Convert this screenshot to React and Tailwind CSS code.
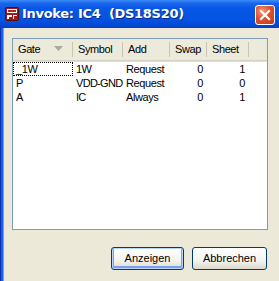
import React from 'react';

const columns = [
  { key: 'gate', label: 'Gate', width: 'w-[60px]', align: 'left', sort: true },
  { key: 'symbol', label: 'Symbol', width: 'w-[50px]', align: 'left' },
  { key: 'add', label: 'Add', width: 'w-[47px]', align: 'left' },
  { key: 'swap', label: 'Swap', width: 'w-[37px]', align: 'right' },
  { key: 'sheet', label: 'Sheet', width: 'w-[42px]', align: 'right' },
];

const rows = [
  { gate: '_1W', symbol: '1W', add: 'Request', swap: '0', sheet: '1' },
  { gate: 'P', symbol: 'VDD-GND', add: 'Request', swap: '0', sheet: '0' },
  { gate: 'A', symbol: 'IC', add: 'Always', swap: '0', sheet: '1' },
];

const AppIcon = () => (
  <svg width="14" height="14" viewBox="0 0 14 14">
    <rect x="0.5" y="0.5" width="13" height="13" rx="1" fill="#9b1b1b" stroke="#5a0a0a" />
    <rect x="2" y="2" width="10" height="4" fill="#fff" />
    <rect x="3" y="3" width="8" height="2" fill="#b42222" />
    <path d="M2 8h5v2H4v2H2z" fill="#fff" />
    <path d="M8 8h4v1H9v3H8z" fill="#fff" />
  </svg>
);

const XpButton = ({ children, isDefault, width }) => (
  <button
    className={`${width} h-[23px] rounded-[3px] border border-[#003c74] bg-[linear-gradient(to_bottom,#ffffff_0%,#f4f3ee_60%,#dcd9cc_100%)] text-[11px] text-black ${
      isDefault ? 'shadow-[inset_0_0_0_1px_#b8d4f8,inset_0_-1px_0_2px_#7d9ff0]' : ''
    }`}
  >
    {children}
  </button>
);

export default function App() {
  return (
    <div className="w-[279px] h-[281px] flex flex-col overflow-hidden font-['Liberation_Sans',Arial,sans-serif] select-none">
      {/* Title bar */}
      <div className="h-[28px] flex items-center pl-[5px] pr-[4px] bg-[linear-gradient(to_bottom,#3b8cf8_0%,#1a64ec_12%,#0758e6_30%,#0453e3_70%,#0347d2_92%,#0a3fb8_100%)]">
        <AppIcon />
        <span className="ml-[3px] text-[13px] font-bold text-white whitespace-pre [text-shadow:1px_1px_0_#0b2a8a] font-['DejaVu_Sans',sans-serif] tracking-[-0.3px]">
          Invoke: IC4  (DS18S20)
        </span>
        <div className="ml-auto w-[20px] h-[20px] mt-[1px] rounded-[3px] border border-white bg-[radial-gradient(circle_at_35%_30%,#f29a7e_0%,#e0512d_45%,#c23a17_100%)] flex items-center justify-center">
          <svg width="12" height="12" viewBox="0 0 12 12">
            <path d="M2 2L10 10M10 2L2 10" stroke="#fff" strokeWidth="2.2" strokeLinecap="square" />
          </svg>
        </div>
      </div>

      {/* Body */}
      <div className="flex-1 flex">
        <div className="w-[4px] bg-[linear-gradient(to_right,#0a2fb0_0,#0a2fb0_1px,#1b5fe8_1px,#1b5fe8_3px,#6aa0f5_3px)]" />
        <div className="flex-1 bg-[#ece9d8] pl-[8px] pt-[10px] flex flex-col">
          {/* List view */}
          <div className="w-[256px] h-[192px] border border-[#7f9db9] bg-white flex flex-col text-[11px] text-black tracking-[-0.4px]">
            <div className="h-[22px] flex bg-[#ebeadb] border-b border-[#d6d2c2] shadow-[0_1px_0_#e2dfd0]">
              {columns.map((c) => (
                <div
                  key={c.key}
                  className={`${c.width} relative flex items-center pl-[5px] border-r border-[#c7c5b2] my-[3px]`}
                >
                  <span>{c.label}</span>
                  {c.sort && (
                    <svg className="absolute right-[9px] top-[4px]" width="9" height="5" viewBox="0 0 9 5">
                      <path d="M0 0h9L4.5 5z" fill="#aca899" />
                    </svg>
                  )}
                </div>
              ))}
              <div className="flex-1" />
            </div>
            <div className="mt-[1px]">
              {rows.map((r, i) => (
                <div key={i} className="h-[14px] flex items-center">
                  {columns.map((c) => (
                    <div
                      key={c.key}
                      className={`${c.width} shrink-0 h-[14px] flex items-center whitespace-nowrap ${
                        c.align === 'right' ? 'justify-end pr-[4px]' : 'pl-[3px]'
                      } ${c.key === 'symbol' ? 'tracking-[-0.7px]' : ''} ${
                        i === 0 && c.key === 'gate' ? 'outline outline-1 outline-dotted outline-black -outline-offset-1' : ''
                      }`}
                    >
                      {r[c.key]}
                    </div>
                  ))}
                </div>
              ))}
            </div>
          </div>

          {/* Buttons */}
          <div className="mt-[17px] flex pl-[99px] gap-[8px]">
            <XpButton isDefault width="w-[73px]">Anzeigen</XpButton>
            <XpButton width="w-[75px]">Abbrechen</XpButton>
          </div>
        </div>
      </div>
    </div>
  );
}
